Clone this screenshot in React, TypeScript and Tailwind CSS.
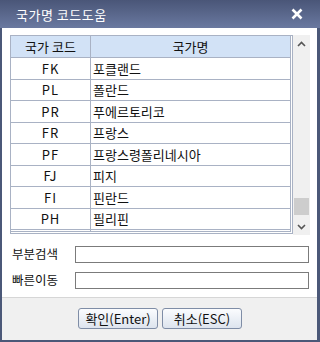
import React from "react";

const rows: [string, string][] = [
  ["FK", "포클랜드"],
  ["PL", "폴란드"],
  ["PR", "푸에르토리코"],
  ["FR", "프랑스"],
  ["PF", "프랑스령폴리네시아"],
  ["FJ", "피지"],
  ["FI", "핀란드"],
  ["PH", "필리핀"],
  ["", ""],
];

const font = { fontFamily: '"Noto Sans CJK KR", "Liberation Sans", sans-serif' };

function Chevron({ down }: { down?: boolean }) {
  return (
    <svg width="9" height="6" viewBox="0 0 9 6" className="block">
      <polyline
        points={down ? "1,1 4.5,4.5 8,1" : "1,5 4.5,1.5 8,5"}
        fill="none"
        stroke="#555"
        strokeWidth="1.6"
      />
    </svg>
  );
}

export default function App() {
  return (
    <div className="w-[320px] h-[342px] flex flex-col bg-[#4b5878] text-[#111]" style={font}>
      {/* title bar */}
      <div className="h-[28px] shrink-0 flex items-center justify-between pl-[16px] pr-[17px] bg-gradient-to-b from-[#4a5678] to-[#6a79a0]">
        <span className="text-white text-[13px] tracking-[0.5px] leading-none">국가명 코드도움</span>
        <svg width="12" height="12" viewBox="0 0 12 12">
          <path d="M1.5 1.5 L10.5 10.5 M10.5 1.5 L1.5 10.5" stroke="#fff" strokeWidth="2.6" />
        </svg>
      </div>

      {/* body */}
      <div className="flex-1 flex flex-col ml-[2px] mr-[3px] mb-[2px] bg-white">
        <div className="pt-[7px] pl-[8px] flex">
          {/* list */}
          <div className="w-[283px] h-[199px] border border-[#a9b2c4] pr-px pb-px">
            <div className="h-full border-r border-b border-[#a9b2c4] overflow-hidden text-[13px]">
              <div className="flex h-[22px] bg-[#d2e2f6] border-b border-[#a9b2c4]">
                <div className="w-[80px] border-r border-[#a9b2c4] flex items-center justify-center">
                  국가 코드
                </div>
                <div className="flex-1 flex items-center justify-center">국가명</div>
              </div>
              {rows.map(([code, name], i) => (
                <div key={i} className="flex h-[21.5px] shrink-0 border-b border-[#a9b2c4]">
                  <div className="w-[80px] border-r border-[#a9b2c4] flex items-center justify-center tracking-[1px]">
                    {code}
                  </div>
                  <div className="flex-1 flex items-center pl-[2px]">{name}</div>
                </div>
              ))}
            </div>
          </div>
          {/* scrollbar */}
          <div className="w-[17px] h-[200px] bg-[#f0f0f0] flex flex-col items-center">
            <div className="h-[17px] w-full flex items-center justify-center">
              <Chevron />
            </div>
            <div className="flex-1 w-full relative">
              <div className="absolute left-px right-px top-[146px] h-[17px] bg-[#cdcdcd]" />
            </div>
            <div className="h-[17px] w-full flex items-center justify-center">
              <Chevron down />
            </div>
          </div>
        </div>

        {/* search fields */}
        <div className="flex flex-col gap-[9px] pt-[11px] pl-[10px] pr-[8px] text-[12.5px]">
          <div className="flex items-center">
            <span className="w-[63px] leading-none">부분검색</span>
            <div className="flex-1 h-[17px] border border-[#7b7b7b] bg-white" />
          </div>
          <div className="flex items-center">
            <span className="w-[63px] leading-none">빠른이동</span>
            <div className="flex-1 h-[17px] border border-[#7b7b7b] bg-white" />
          </div>
        </div>

        {/* buttons */}
        <div className="mt-auto h-[43px] border-t border-[#d6d6d6] bg-[#f0f0f0] flex justify-center pt-[10px] gap-[4px] pl-px">
          <button className="w-[80px] h-[21px] rounded-[3px] border border-[#7f8da6] bg-gradient-to-b from-[#fbfcfe] to-[#dde4ee] text-[13px] leading-none">
            확인(Enter)
          </button>
          <button className="w-[80px] h-[21px] rounded-[3px] border border-[#7f8da6] bg-gradient-to-b from-[#fbfcfe] to-[#dde4ee] text-[13px] leading-none">
            취소(ESC)
          </button>
        </div>
      </div>
    </div>
  );
}
